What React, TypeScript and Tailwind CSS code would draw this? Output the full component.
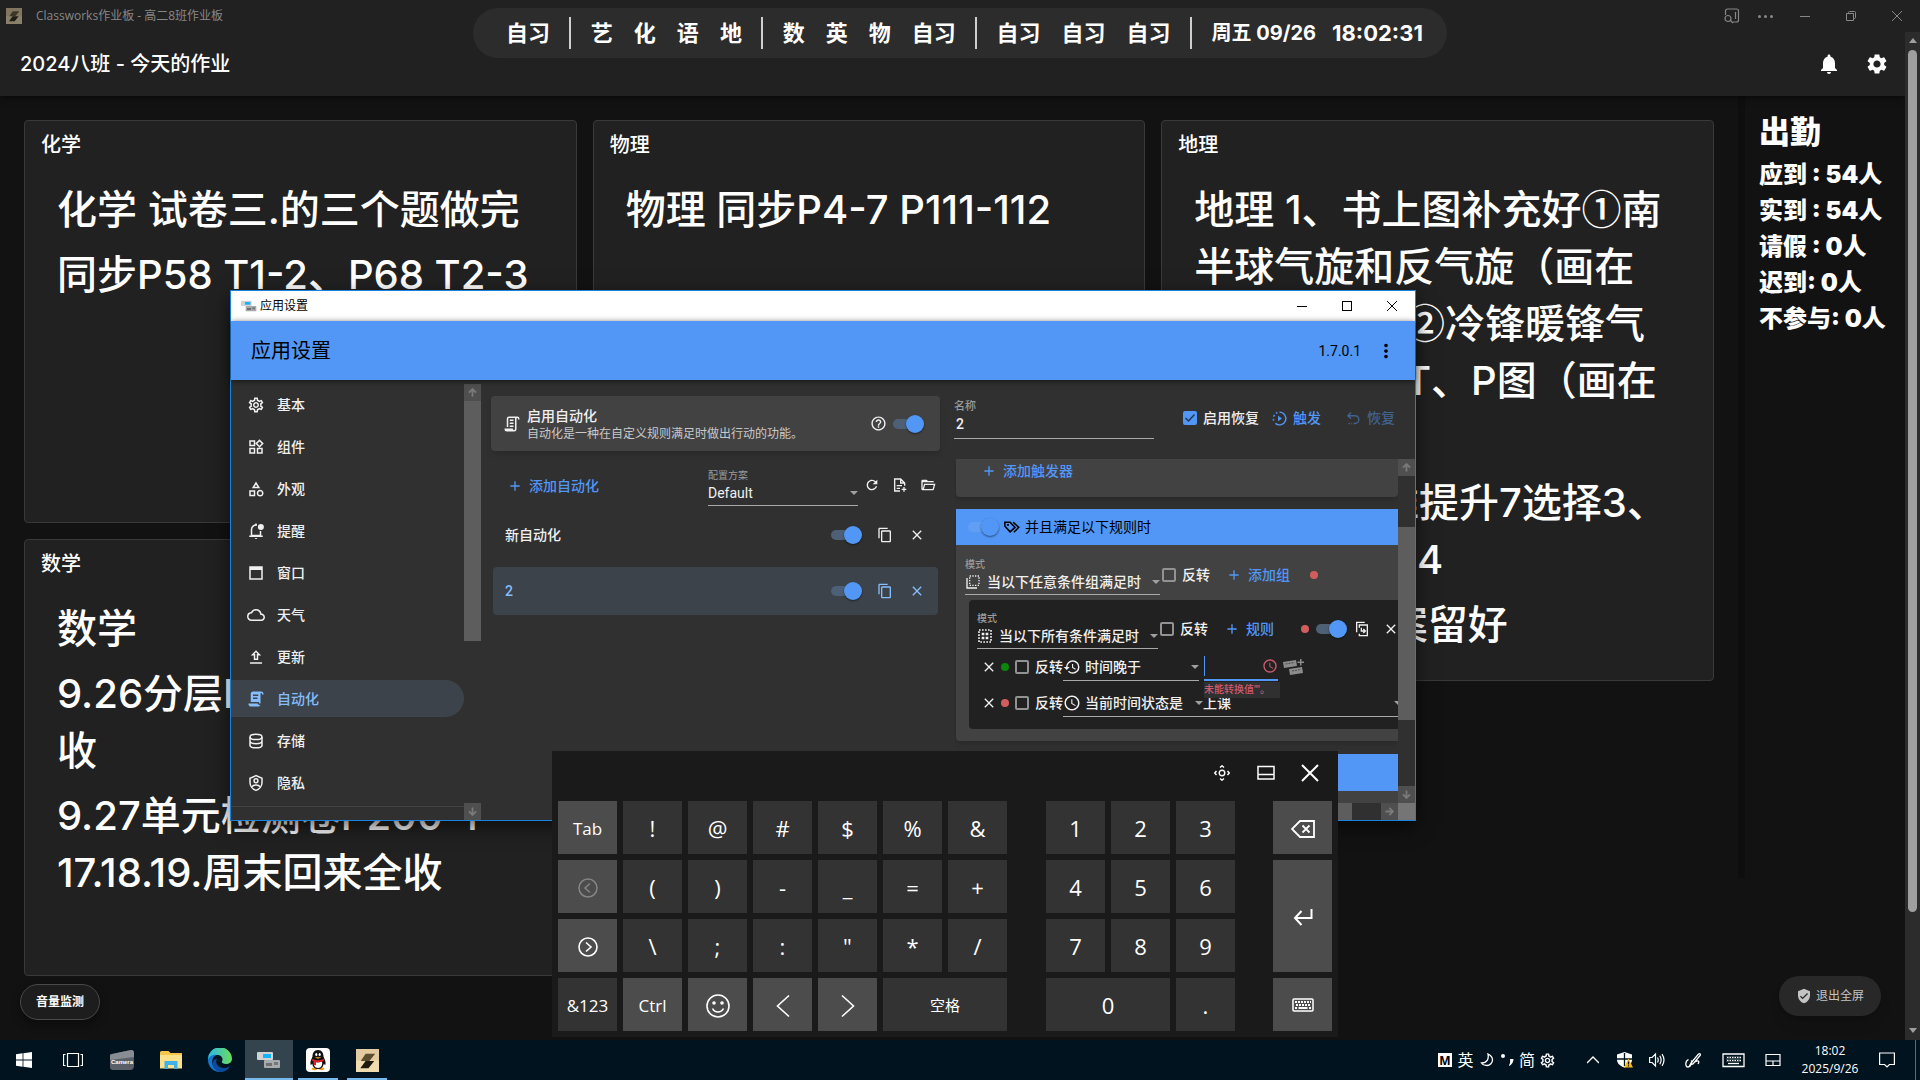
import React from "react";
import {
  MdOutlineSettings,
  MdOutlineWidgets,
  MdOutlineCategory,
  MdOutlineCloud,
  MdRefresh,
  MdHelpOutline,
  MdContentCopy,
  MdClose,
  MdHistory,
  MdAccessTime,
  MdSettings,
  MdNotifications,
  MdMoreVert,
  MdAdd,
  MdVerifiedUser,
} from "react-icons/md";

type SvgProps = { className?: string };

/* ---------- icons ---------- */

const Stroke = ({ className = "", w = 1.5, box = 24, children }: { className?: string; w?: number; box?: number; children: React.ReactNode }) => (
  <svg viewBox={`0 0 ${box} ${box}`} fill="none" stroke="currentColor" strokeWidth={w} className={className} aria-hidden="true">
    {children}
  </svg>
);

const ScriptOutline = ({ className }: SvgProps) => (
  <svg viewBox="0 0 24 24" fill="currentColor" className={className} aria-hidden="true">
    <path d="M15,20A1,1 0 0,0 16,19V4H8A1,1 0 0,0 7,5V16H5V5A3,3 0 0,1 8,2H19A3,3 0 0,1 22,5V6H20V5A1,1 0 0,0 19,4A1,1 0 0,0 18,5V9L18,19A3,3 0 0,1 15,22H5A3,3 0 0,1 2,19V18H13A2,2 0 0,0 15,20M9,6H14V8H9V6M9,10H14V12H9V10M9,14H14V16H9V14Z" />
  </svg>
);
const ScriptFilled = ({ className }: SvgProps) => (
  <svg viewBox="0 0 24 24" fill="currentColor" className={className} aria-hidden="true">
    <path d="M17.8,20C17.4,21.2 16.3,22 15,22H5C3.3,22 2,20.7 2,19V18H5L14.2,18C14.6,19.2 15.7,20 17,20H17.8M19,2C20.7,2 22,3.3 22,5V6H20V5C20,4.4 19.6,4 19,4C18.4,4 18,4.4 18,5V18H17C16.4,18 16,17.6 16,17V16H5V5C5,3.3 6.3,2 8,2H19M8,6V8H15V6H8M8,10V12H14V10H8Z" />
  </svg>
);
const BellBadge = ({ className }: SvgProps) => (
  <Stroke className={className} w={2}>
    <path d="M13 4.2A6 6 0 0 0 6 10v8h12v-6M3 19h18" />
    <path d="M10.2 21.4a2 2 0 0 0 3.6 0z" fill="currentColor" stroke="none" />
    <path d="M12 2v2.500" />
    <circle cx="18.500" cy="6.500" r="4" fill="currentColor" stroke="none" />
  </Stroke>
);
const WindowIcon = ({ className }: SvgProps) => (
  <svg viewBox="0 0 24 24" fill="currentColor" className={className} aria-hidden="true">
    <path d="M3 3h18v18H3zM5 8v11h14V8z" fillRule="evenodd" />
  </svg>
);
const UploadIcon = ({ className }: SvgProps) => (
  <svg viewBox="0 0 24 24" fill="currentColor" className={className} aria-hidden="true">
    <path d="M9 16h6v-6h4l-7-7-7 7h4v6zm3-10.170L14.170 8H13v6h-2V8H9.830L12 5.830zM4 19h16v2H4z" />
  </svg>
);
const ShieldUserIcon = ({ className }: SvgProps) => (
  <Stroke className={className} w={2}>
    <path d="M12 2.200 4 5.700V11c0 5 3.300 9.500 8 10.800 4.700-1.300 8-5.800 8-10.800V5.700z" />
    <circle cx="12" cy="9" r="2.600" />
    <path d="M6.500 17.200c1-2 3.200-2.700 5.500-2.700s4.500.700 5.500 2.700" />
  </Stroke>
);
const DatabaseIcon = ({ className }: SvgProps) => (
  <Stroke className={className} w={2}>
    <ellipse cx="12" cy="6.500" rx="8" ry="3.500" />
    <path d="M4 6.500v11C4 19.500 7.500 21 12 21s8-1.500 8-3.500v-11M4 12c0 2 3.500 3.500 8 3.500s8-1.500 8-3.500" />
  </Stroke>
);
const FolderOpen = ({ className }: SvgProps) => (
  <svg viewBox="0 0 24 24" fill="currentColor" className={className} aria-hidden="true">
    <path d="M6.1,10L4,18V8H21A2,2 0 0,0 19,6H12L10,4H4A2,2 0 0,0 2,6V18A2,2 0 0,0 4,20H19C19.9,20 20.7,19.4 20.9,18.5L23.2,10H6.1M19,18H6L7.6,12H20.6L19,18Z" />
  </svg>
);
const TagsIcon = ({ className }: SvgProps) => (
  <Stroke className={className} w={2}>
    <path d="M2.500 5.500v5.500l7 7.500 6.500-6L9.500 5.500zM13.500 5.500l7.500 7-6.500 6.500" />
    <circle cx="6.500" cy="9.200" r="1.500" fill="currentColor" stroke="none" />
  </Stroke>
);
const FilePlus = ({ className }: SvgProps) => (
  <Stroke className={className} w={2}>
    <path d="M12 21H4V3h9l6 6v4M13 3v6h6M7 13h8M7 17h5M18 15v7M14.500 18.500h7" />
  </Stroke>
);
const PlayProgress = ({ className }: SvgProps) => (
  <Stroke className={className} w={2}>
    <path d="M12 3a9 9 0 1 1-5.800 15.900M9 3.500 7 4.700M5 7 3.600 9.300M3.200 12.500l.5 2.500" />
    <path d="M10 8v8l5.500-4z" fill="currentColor" stroke="none" />
  </Stroke>
);
const UndoIcon = ({ className }: SvgProps) => (
  <Stroke className={className} w={2}>
    <path d="M8.500 3.500 4 8l4.500 4.500M4 8h10a5.500 5.500 0 0 1 0 11h-2M5 19h2M9 19h1" />
  </Stroke>
);
const SelectMultiple = ({ className }: SvgProps) => (
  <Stroke className={className} w={2}>
    <path d="M3 6v15h15" />
    <path d="M7 3h14v14H7z" strokeDasharray="2 2" />
  </Stroke>
);
const SelectAll = ({ className }: SvgProps) => (
  <Stroke className={className} w={2.5}>
    <path d="M3 3h18v18H3z" strokeDasharray="2.500 2" />
    <path d="M7 7h4v4H7zM13 7h4v4h-4zM7 13h4v4H7zM13 13h4v4h-4z" fill="currentColor" stroke="none" />
  </Stroke>
);
const CopyArrow = ({ className }: SvgProps) => (
  <Stroke className={className} w={2}>
    <path d="M4 17V2h12M8 10V6h12v16H8v-3" />
    <path d="M11 10v5h6M14 12l3 3-3 3" />
  </Stroke>
);
const KeyPad = ({ className }: SvgProps) => (
  <svg viewBox="0 0 24 18" className={className} aria-hidden="true">
    <g fill="#8c8c8c">
      <path d="m1 4 13-2 1 6-13 2z" />
      <path d="m7 11 13-2 1 6-13 2z" />
      <path d="M18 1h1.500v2.500H22V5h-2.500v2.500H18V5h-2.500V3.500H18z" />
    </g>
    <path d="m3.500 6 9-1.500M10 13l9-1.500" stroke="#4a4a4a" strokeWidth="1" strokeDasharray="2 1" />
  </svg>
);
const Triangle = ({ className }: SvgProps) => (
  <svg viewBox="0 0 8 4" fill="currentColor" className={className} aria-hidden="true">
    <path d="M0 0h8L4 4z" />
  </svg>
);
const Arrow = ({ className }: SvgProps) => (
  <Stroke className={className} w={2} box={10}>
    <path d="M5 9.500V1.500M1 5.200 5 1.200l4 4" />
  </Stroke>
);
const BoltIcon = ({ className }: SvgProps) => (
  <svg viewBox="0 0 24 24" className={className} aria-hidden="true">
    <rect width="24" height="24" fill="#e3cba1" />
    <rect y="12" width="24" height="12" fill="#f1dcb2" />
    <path d="M10 5h10L14 12.500H5z" fill="#5c4c30" />
    <path d="m10 12.500h9L13 20H4.500z" fill="#1f180c" />
  </svg>
);
const LessonIcon = ({ className }: SvgProps) => (
  <svg viewBox="0 0 24 18" className={className} aria-hidden="true">
    <rect x="0" y="1" width="16" height="8" rx="1" fill="#cfd2d4" />
    <rect x="6" y="3" width="8" height="4" fill="#12b4f5" />
    <rect x="7" y="9" width="16" height="8" rx="1" fill="#a7abae" />
    <rect x="9" y="12" width="6" height="3" fill="#6d7073" />
    <rect x="17" y="11" width="4" height="3" fill="#74787b" />
  </svg>
);

/* ---------- shared controls ---------- */

const Toggle = ({ label, faint = false }: { label: string; faint?: boolean }) => (
  <input
    type="checkbox"
    role="switch"
    aria-label={label}
    defaultChecked
    className={
      "relative h-[18px] w-[31px] shrink-0 appearance-none before:absolute before:left-0 before:top-1 before:h-[10px] before:w-6 before:rounded-full after:absolute after:right-0 after:top-0 after:size-[18px] after:rounded-full after:bg-[#5297f6] after:shadow-[0_1px_2px_rgba(0,0,0,0.5)] " +
      (faint ? "before:bg-[#619ff5]" : "before:bg-[#4d6076]")
    }
  />
);

const Tick = ({ label, checked = false }: { label: string; checked?: boolean }) => (
  <label className="flex shrink-0 items-center gap-1.5 whitespace-nowrap">
    <span className="relative size-3.5">
      <input
        type="checkbox"
        defaultChecked={checked}
        className="peer block size-3.5 appearance-none rounded-xs border-2 border-[#929292] checked:border-[#5297f6] checked:bg-[#5297f6]"
      />
      <svg viewBox="0 0 14 14" className="pointer-events-none absolute inset-0 hidden peer-checked:block" fill="none" stroke="#24384f" strokeWidth="1.500">
        <path d="m2.500 7 3 3 6-6.500" />
      </svg>
    </span>
    {label}
  </label>
);

const Field = ({ label, value, icon, className = "" }: { label: string; value: string; icon?: React.ReactNode; className?: string }) => (
  <label className={"block shrink-0 " + className}>
    <span className="block text-[10px] leading-3 text-[#9a9a9a]">{label}</span>
    <span className="flex h-6 items-center gap-1.5 border-b border-[#a9a9a9] pb-0.5">
      {icon}
      <select className="min-w-0 flex-1 appearance-none bg-transparent leading-5 outline-none" defaultValue={value}>
        <option>{value}</option>
      </select>
      <Triangle className="h-1 w-2 shrink-0 text-[#a0a0a0]" />
    </span>
  </label>
);

const InlineField = ({ label, value, icon, className = "" }: { label: string; value: string; icon?: React.ReactNode; className?: string }) => (
  <span className={"flex h-7 shrink-0 items-center gap-1 border-b border-[#a9a9a9] " + className}>
    {icon}
    <select aria-label={label} className="min-w-0 flex-1 appearance-none bg-transparent leading-5 outline-none" defaultValue={value}>
      <option>{value}</option>
    </select>
    <Triangle className="h-1 w-2 shrink-0 text-[#a0a0a0]" />
  </span>
);

const AddButton = ({ children, className = "" }: { children: React.ReactNode; className?: string }) => (
  <button className={"flex shrink-0 items-center gap-1.5 whitespace-nowrap text-[#5297f6] " + className}>
    <MdAdd className="size-4" />
    {children}
  </button>
);

const IconButton = ({ label, children }: { label: string; children: React.ReactNode }) => (
  <button aria-label={label} className="grid size-[18px] shrink-0 place-items-center">
    {children}
  </button>
);

/* ---------- homework board ---------- */

/* Circled digits come from the CJK face so that they keep a full-width cell. */
const HomeworkLine = ({ text }: { text: string }) => (
  <p>
    {text.split(/([①②])/).map((part, i) =>
      part === "①" || part === "②" ? (
        <span key={i} className="font-['Noto_Sans_CJK_SC',sans-serif] leading-none">{part}</span>
      ) : (
        part
      ),
    )}
  </p>
);

const SubjectCard = ({ title, items, className = "" }: { title: string; items: string[][]; className?: string }) => (
  <section className={"overflow-hidden rounded border border-[#393939] bg-[#212121] pb-[27px] " + className}>
    <h2 className="px-4 py-2 text-xl leading-8 font-medium">{title}</h2>
    <ul className="flex flex-col gap-2 px-8 pt-3 text-[40px] leading-[57px] font-medium whitespace-pre">
      {items.map((lines, i) => (
        <li key={i}>
          {lines.map((line) => (
            <HomeworkLine key={line} text={line} />
          ))}
        </li>
      ))}
    </ul>
  </section>
);

const attendance = ["应到 : 54人", "实到 : 54人", "请假 : 0人", "迟到: 0人", "不参与: 0人"];

const Board = () => (
  <div className="isolate flex min-h-0 flex-1 flex-col bg-[#121212] text-white">
    <header className="flex h-8 shrink-0 items-center bg-[#212121] text-[#878787]">
      <BoltIcon className="ml-1.5 size-4 opacity-50" />
      <span className="ml-3.5 font-['Open_Sans','Noto_Sans_CJK_SC',sans-serif] text-xs">Classworks作业板 - 高二8班作业板</span>
      <div className="ml-auto flex items-center">
        <button aria-label="搜索标签页" className="grid w-8 place-items-center">
          <Stroke className="size-4" w={1.2} box={16}>
            <path d="M1.500 7V3a2 2 0 0 1 2-2h9a2 2 0 0 1 2 2v9a2 2 0 0 1-2 2H9M11.500 4v7" />
            <circle cx="4" cy="10.500" r="3" />
            <path d="m6.500 12.500 2.500 2.500" />
          </Stroke>
        </button>
        <button aria-label="更多" className="flex w-[34px] justify-center gap-[3px]">
          <i className="size-[3px] rounded-full bg-[#878787]" />
          <i className="size-[3px] rounded-full bg-[#878787]" />
          <i className="size-[3px] rounded-full bg-[#878787]" />
        </button>
        <button aria-label="最小化" className="grid w-[46px] place-items-center">
          <i className="h-px w-2.5 bg-[#878787]" />
        </button>
        <button aria-label="还原" className="grid w-[46px] place-items-center">
          <Stroke className="size-2.5" w={1} box={10}>
            <path d="M.5 2.500h7v7h-7zM2.500 2.500v-1a1 1 0 0 1 1-1h5a1 1 0 0 1 1 1v5a1 1 0 0 1-1 1h-1" />
          </Stroke>
        </button>
        <button aria-label="关闭" className="grid w-[46px] place-items-center">
          <Stroke className="size-2.5" w={1} box={10}>
            <path d="m0 0 10 10M10 0 0 10" />
          </Stroke>
        </button>
      </div>
    </header>

    <div className="flex min-h-0 flex-1">
      <div className="relative flex min-w-0 flex-1 flex-col overflow-hidden">
        <div className="z-10 flex h-16 shrink-0 items-center bg-[#212121] px-5 shadow-[0_2px_6px_rgba(0,0,0,0.5)]">
          <h1 className="text-xl font-medium">2024八班 - 今天的作业</h1>
          <button aria-label="消息" className="ml-auto grid size-6 place-items-center">
            <MdNotifications className="size-6" />
          </button>
          <button aria-label="设置" className="mr-[-4px] ml-6 grid size-6 place-items-center">
            <MdSettings className="size-6" />
          </button>
        </div>
        <div className="flex flex-1">
          <main className="grid flex-1 grid-cols-3 items-start gap-4 p-6">
            <div className="flex flex-col gap-4">
              <SubjectCard
                title="化学"
                className="min-h-[403px]"
                items={[["化学 试卷三.的三个题做完"], ["同步P58 T1-2、P68 T2-3"]]}
              />
              <SubjectCard
                title="数学"
                className="min-h-[437px]"
                items={[["数学"], ["9.26分层P", "收"], ["9.27单元检测卷P200-1", "17.18.19.周末回来全收"]]}
              />
            </div>
            <SubjectCard title="物理" className="min-h-[403px]" items={[["物理 同步P4-7 P111-112"]]} />
            <SubjectCard
              title="地理"
              items={[
                ["地理 1、书上图补充好①南", "半球气旋和反气旋（画在", "同一图上） ②冷锋暖锋气", "压变化图、 T、P图（画在", "书上）"],
                ["2、课后重难提升7选择3、", "做到选择题: 4"],
                ["综合题 : 答案留好"],
              ]}
            />
          </main>
          <div className="h-[782px] w-[7px] bg-[#0e0e0e]" />
          <aside className="w-40 pt-[17px] pl-[14px] font-black">
            <h2 className="mb-1.5 text-[31px] leading-[38px]">出勤</h2>
            <ul className="text-2xl leading-9 whitespace-nowrap">
              {attendance.map((row) => (
                <li key={row}>{row}</li>
              ))}
            </ul>
          </aside>
        </div>
        <button className="absolute bottom-5 left-5 h-9 w-20 rounded-full border border-[#4a4a4a] bg-[#1d1d1d] text-xs font-bold shadow-[0_4px_10px_rgba(0,0,0,0.4)]">
          音量监测
        </button>
        <button className="absolute right-6 bottom-6 flex h-10 items-center gap-1 rounded-full bg-[#282828] px-[17px] text-xs text-[#c4c4c4] shadow-lg">
          <MdVerifiedUser className="size-4" />
          退出全屏
        </button>
      </div>
      <div className="flex w-[15px] shrink-0 flex-col items-center bg-[#2c2c2c] text-[#9f9f9f]">
        <svg viewBox="0 0 8 5" className="mt-1.5 h-[5px] w-2" fill="currentColor"><path d="M0 5h8L4 0z" /></svg>
        <div className="mt-[7px] h-[862px] w-[9px] rounded-full bg-[#9f9f9f]" />
        <svg viewBox="0 0 8 5" className="mt-auto mb-[7px] h-[5px] w-2" fill="currentColor"><path d="M0 0h8L4 5z" /></svg>
      </div>
    </div>
  </div>
);

/* ---------- timetable pill ---------- */

const timetable = [["自习"], ["艺", "化", "语", "地"], ["数", "英", "物", "自习"], ["自习", "自习", "自习"]];

const Timetable = () => (
  <div className="absolute top-2 left-[473px] z-10 flex h-[50px] w-[974px] items-center justify-between rounded-full bg-[#2c2c2c] pr-6 pl-[33px] text-[22px] font-bold whitespace-nowrap text-white">
    {timetable.map((group, i) => (
      <React.Fragment key={i}>
        <div className="flex gap-[21px]">
          {group.map((lesson, j) => (
            <span key={j}>{lesson}</span>
          ))}
        </div>
        <i className="h-8 w-0.5 bg-[#cfcfcf]" />
      </React.Fragment>
    ))}
    <div className="flex items-center gap-4">
      <span className="text-xl">周五 09/26</span>
      <time>18:02:31</time>
    </div>
  </div>
);

/* ---------- settings window ---------- */

const navItems: { name: string; Icon: React.ComponentType<{ className?: string }> }[] = [
  { name: "基本", Icon: MdOutlineSettings },
  { name: "组件", Icon: MdOutlineWidgets },
  { name: "外观", Icon: MdOutlineCategory },
  { name: "提醒", Icon: BellBadge },
  { name: "窗口", Icon: WindowIcon },
  { name: "天气", Icon: MdOutlineCloud },
  { name: "更新", Icon: UploadIcon },
  { name: "自动化", Icon: ScriptFilled },
  { name: "存储", Icon: DatabaseIcon },
  { name: "隐私", Icon: ShieldUserIcon },
];

const ScrollButton = ({ turn = "" }: { turn?: string }) => (
  <button aria-label="滚动" className="grid size-[17px] shrink-0 place-items-center bg-[#4f4f4f] text-[#7a7a7a]">
    <Arrow className={"size-[9px] " + turn} />
  </button>
);

const AutomationRow = ({ name, selected = false }: { name: string; selected?: boolean }) => (
  <li className={"flex h-12 items-center gap-3.5 rounded px-3 " + (selected ? "bg-[#3c434b] text-[#86bdfb]" : "")}>
    <span className="mr-auto">{name}</span>
    <Toggle label={name} />
    <IconButton label="复制"><MdContentCopy className="size-4" /></IconButton>
    <IconButton label="删除"><MdClose className="size-4" /></IconButton>
  </li>
);

const Settings = () => (
  <div className="absolute top-[290px] left-[230px] flex h-[531px] w-[1186px] flex-col border border-[#1a82dc] bg-[#303030] font-['Roboto','Noto_Sans_CJK_SC',sans-serif] text-sm leading-5 font-medium text-[#f0f0f0] shadow-[0_6px_18px_rgba(0,0,0,0.6)]">
    <div className="flex h-[30px] shrink-0 items-center bg-white text-xs font-normal text-black">
      <LessonIcon className="mr-[3px] ml-2.5 h-3 w-4" />
      应用设置
      <button aria-label="最小化" className="ml-auto grid h-full w-[45px] place-items-center"><i className="h-px w-2.5 bg-black" /></button>
      <button aria-label="最大化" className="grid h-full w-[45px] place-items-center"><i className="size-2.5 border border-black" /></button>
      <button aria-label="关闭" className="grid h-full w-[46px] place-items-center">
        <Stroke className="size-2.5" w={1} box={10}><path d="m0 0 10 10M10 0 0 10" /></Stroke>
      </button>
    </div>
    <div className="z-10 flex h-[59px] shrink-0 items-center bg-[#5297f6] px-5 text-black shadow-[0_1px_6px_rgba(0,0,0,0.6)]">
      <h1 className="text-xl font-normal">应用设置</h1>
      <span className="ml-auto font-normal">1.7.0.1</span>
      <button aria-label="菜单" className="mr-[-2px] ml-3.5"><MdMoreVert className="size-[22px]" /></button>
    </div>

    <div className="flex min-h-0 flex-1 pt-px">
      <nav className="flex w-[233px] shrink-0 flex-col gap-[5px] overflow-hidden pt-[5px]">
        {navItems.map(({ name, Icon }) => (
          <button
            key={name}
            className={
              "flex h-[37px] shrink-0 items-center gap-3 rounded-r-full pl-4 " +
              (name === "自动化" ? "bg-[#3c434b] text-[#86bdfb]" : "")
            }
          >
            <Icon className="size-[18px]" />
            {name}
          </button>
        ))}
        <hr className="border-[#424242]" />
      </nav>
      <div className="flex w-[17px] shrink-0 flex-col pt-[3px]">
        <ScrollButton />
        <div className="h-60 bg-[#5d5d5d]" />
        <div className="mt-auto flex"><ScrollButton turn="rotate-180" /></div>
      </div>

      <section className="ml-2.5 w-[449px] shrink-0 pt-[15px]">
        <div className="flex h-[55px] items-center gap-1.5 rounded bg-[#424242] pr-4 pl-3 shadow-md">
          <ScriptOutline className="size-[18px]" />
          <div className="mr-auto leading-5">
            <h2>启用自动化</h2>
            <p className="text-xs leading-4 font-normal text-[#c9c9c9]">自动化是一种在自定义规则满足时做出行动的功能。</p>
          </div>
          <IconButton label="帮助"><MdHelpOutline className="size-[17px]" /></IconButton>
          <Toggle label="启用自动化" />
        </div>
        <div className="mt-[17px] flex h-[43px] items-start pr-[3px] pl-4">
          <AddButton className="mt-2">添加自动化</AddButton>
          <Field label="配置方案" value="Default" className="mt-0.5 ml-auto w-[150px] font-normal" />
          <div className="mt-2 ml-[5px] flex gap-2.5">
            <IconButton label="刷新"><MdRefresh className="size-4" /></IconButton>
            <IconButton label="新建"><FilePlus className="size-4" /></IconButton>
            <IconButton label="打开"><FolderOpen className="size-4" /></IconButton>
          </div>
        </div>
        <ul className="mx-0.5 flex flex-col gap-2">
          <AutomationRow name="新自动化" />
          <AutomationRow name="2" selected />
        </ul>
      </section>

      <section className="ml-3.5 flex min-w-0 flex-1 flex-col pt-5">
        <div className="flex h-[58px] shrink-0 items-start pr-5">
          <label className="w-[200px]">
            <span className="block text-[11px] leading-3 text-[#9a9a9a]">名称</span>
            <input defaultValue="2" className="block h-[26px] w-full border-b border-[#a9a9a9] bg-transparent pb-1 pl-0.5 outline-none" />
          </label>
          <div className="ml-auto flex h-[34px] items-center">
            <Tick label="启用恢复" checked />
            <button className="ml-3 flex items-center gap-[5px] text-[#5297f6]"><PlayProgress className="size-[17px]" />触发</button>
            <button disabled className="ml-6 flex items-center gap-[5px] text-[#41638f]"><UndoIcon className="size-[17px]" />恢复</button>
          </div>
        </div>

        <div className="flex min-h-0 flex-1">
          <div className="min-w-0 flex-1 overflow-hidden pl-0.5">
            <div className="flex h-[38px] items-start rounded-b bg-[#424242] pt-0.5 pl-[25px] shadow-md">
              <AddButton>添加触发器</AddButton>
            </div>
            <div className="mt-3 rounded-bl bg-[#424242] pb-3 shadow-md">
              <div className="flex h-9 items-center gap-1 bg-[#5297f6] pl-3 font-normal text-black">
                <Toggle label="启用规则" faint />
                <TagsIcon className="size-[18px]" />
                并且满足以下规则时
              </div>
              <div className="flex pt-3.5 pl-[9px]">
                <Field label="模式" value="当以下任意条件组满足时" className="w-[195px]" icon={<SelectMultiple className="size-4 shrink-0" />} />
                <div className="ml-0.5 flex h-8 items-center">
                  <Tick label="反转" />
                  <AddButton className="ml-4">添加组</AddButton>
                  <i className="ml-5 size-2 rounded-full bg-[#d25d5d]" />
                </div>
              </div>
              <div className="mt-[5px] ml-[13px] overflow-hidden rounded-l bg-[#212121] pt-[13px] pb-3">
                <div className="flex pl-2">
                  <Field label="模式" value="当以下所有条件满足时" className="w-[181px]" icon={<SelectAll className="size-4 shrink-0" />} />
                  <div className="ml-0.5 flex h-8 shrink-0 items-center">
                    <Tick label="反转" />
                    <AddButton className="ml-4">规则</AddButton>
                    <i className="mr-[7px] ml-[27px] size-2 rounded-full bg-[#d25d5d]" />
                    <Toggle label="启用条件组" />
                    <div className="ml-1.5 flex gap-[11px]">
                      <IconButton label="复制条件组"><CopyArrow className="size-4" /></IconButton>
                      <IconButton label="删除条件组"><MdClose className="size-4" /></IconButton>
                    </div>
                  </div>
                </div>
                <div className="mt-1 flex flex-col gap-2 pl-[11px]">
                  <div className="flex h-7 items-center">
                    <IconButton label="删除规则"><MdClose className="size-4" /></IconButton>
                    <i className="mr-1.5 ml-[3px] size-2 shrink-0 rounded-full bg-[#0b870b]" />
                    <Tick label="反转" />
                    <InlineField label="规则类型" value="时间晚于" className="w-[136px]" icon={<MdHistory className="size-[18px]" />} />
                    <div className="relative ml-[5px] flex h-7 w-[74px] items-center border-b-2 border-[#5297f6]">
                      <i className="h-5 w-px shrink-0 bg-[#5297f6]" />
                      <input aria-label="时间" className="min-w-0 flex-1 bg-transparent outline-none" />
                      <MdAccessTime className="size-4 shrink-0 text-[#cf5a70]" />
                      <p className="absolute top-[29px] left-0 z-10 h-4 w-[76px] bg-[#303030] text-[10px] leading-4 whitespace-nowrap text-[#cf5a70]">未能转换值""。</p>
                    </div>
                    <KeyPad className="ml-1 h-[18px] w-6" />
                  </div>
                  <div className="flex h-7 items-center">
                    <IconButton label="删除规则"><MdClose className="size-4" /></IconButton>
                    <i className="mr-1.5 ml-[3px] size-2 shrink-0 rounded-full bg-[#d25d5d]" />
                    <Tick label="反转" />
                    <InlineField label="规则类型" value="当前时间状态是" className="w-[140px]" icon={<MdAccessTime className="size-[18px]" />} />
                    <InlineField label="状态" value="上课" className="w-[199px]" />
                  </div>
                </div>
              </div>
            </div>
            <div className="mt-[13px] h-[37px] bg-[#5297f6]" />
            <div className="h-3 bg-[#424242]" />
          </div>
          <div className="flex w-[17px] shrink-0 flex-col">
            <ScrollButton />
            <div className="mt-[51px] h-[193px] bg-[#5d5d5d]" />
            <div className="mt-auto flex"><ScrollButton turn="rotate-180" /></div>
          </div>
        </div>
        <div className="flex h-[17px] shrink-0">
          <div className="flex-1 bg-[#5d5d5d]" />
          <div className="w-[29px]" />
          <ScrollButton turn="rotate-90" />
          <div className="w-[17px] bg-[#757575]" />
        </div>
      </section>
    </div>
  </div>
);

/* ---------- touch keyboard ---------- */

const Key = ({ children, light = false, small = false, className = "", label }: { children: React.ReactNode; light?: boolean; small?: boolean; className?: string; label?: string }) => (
  <button
    aria-label={label}
    className={
      "grid place-items-center pt-0.5 text-white " + (light ? "bg-[#4c4c4c] " : "bg-[#333333] ") + (small ? "text-[17px] " : "text-[22px] ") + className
    }
  >
    {children}
  </button>
);

const Keyboard = () => (
  <div className="absolute top-[751px] left-[552px] w-[786px] bg-[#1a1a1a] px-1.5 pb-1.5 font-['Open_Sans','Noto_Sans_CJK_SC',sans-serif] text-white">
    <div className="flex h-[50px] items-center justify-end gap-4 pr-2 pb-1.5">
      <button aria-label="移动" className="grid size-7 place-items-center">
        <Stroke className="size-4" w={1.4} box={16}>
          <circle cx="8" cy="8" r="2.800" />
          <path d="M6 2.500 8 .8l2 1.700M6 13.500l2 1.700 2-1.700M2.500 6 .8 8l1.700 2M13.500 6l1.700 2-1.700 2" />
        </Stroke>
      </button>
      <button aria-label="停靠" className="grid size-7 place-items-center">
        <Stroke className="size-[18px]" w={1.5} box={18}>
          <path d="M1 2.500h16v12.500H1zM1 10.500h16" />
        </Stroke>
      </button>
      <button aria-label="关闭键盘" className="grid size-7 place-items-center">
        <Stroke className="size-[18px]" w={2} box={18}><path d="m1 1 16 16M17 1 1 17" /></Stroke>
      </button>
    </div>
    <div className="flex">
      <div className="grid flex-1 auto-rows-[53px] grid-cols-7 gap-1.5">
        <Key light small>Tab</Key>
        {["!", "@", "#", "$", "%", "&"].map((k) => <Key key={k}>{k}</Key>)}
        <Key light label="上一页">
          <Stroke className="size-5 text-[#858585]" w={1.500} box={20}><circle cx="10" cy="10" r="9" /><path d="m12 5.500-5 4.500 5 4.500" /></Stroke>
        </Key>
        {["(", ")", "-", "_", "=", "+"].map((k) => <Key key={k}>{k}</Key>)}
        <Key light label="下一页">
          <Stroke className="size-5" w={1.600} box={20}><circle cx="10" cy="10" r="9" /><path d="m8 5.500 5 4.500-5 4.500" /></Stroke>
        </Key>
        {["\\", ";", ":", '"', "*", "/"].map((k) => <Key key={k}>{k}</Key>)}
        <Key small>&amp;123</Key>
        <Key light small>Ctrl</Key>
        <Key light label="表情">
          <Stroke className="size-6" w={1.600}>
            <circle cx="12" cy="12" r="11" />
            <path d="M6.500 14.500c1.200 2.400 3 3.500 5.500 3.500s4.300-1.100 5.500-3.500" />
            <circle cx="8" cy="9" r="1" fill="currentColor" /><circle cx="16" cy="9" r="1" fill="currentColor" />
          </Stroke>
        </Key>
        <Key light label="左"><Stroke className="size-6" w={1.600}><path d="M18 1.500 6.500 12 18 22.500" /></Stroke></Key>
        <Key light label="右"><Stroke className="size-6" w={1.600}><path d="M6 1.500 17.500 12 6 22.500" /></Stroke></Key>
        <Key className="col-span-2 text-[15px]!">空格</Key>
      </div>
      <div className="ml-[39px] grid w-[189px] auto-rows-[53px] grid-cols-3 gap-1.5">
        {["1", "2", "3", "4", "5", "6", "7", "8", "9"].map((k) => <Key key={k}>{k}</Key>)}
        <Key className="col-span-2">0</Key>
        <Key>.</Key>
      </div>
      <div className="ml-[38px] grid w-[59px] auto-rows-[53px] gap-1.5">
        <Key light label="退格">
          <Stroke className="size-6" w={1.800}><path d="M9 4h14v16H9l-8-8zM11.500 8.500l7 7M18.500 8.500l-7 7" /></Stroke>
        </Key>
        <Key light label="回车" className="row-span-2">
          <Stroke className="size-5" w={2} box={20}><path d="M18.500 2v9H2M8.500 4 2 11l6.500 7" /></Stroke>
        </Key>
        <Key light label="键盘布局">
          <Stroke className="size-[22px]" w={1.500} box={22}>
            <rect x="1" y="4" width="20" height="12" rx="1" />
            <path d="M3 7h16M4 10h14" strokeDasharray="2 1" strokeWidth="1.800" />
            <path d="M3 13h2M6.500 13h9M17 13h2" strokeWidth="1.800" />
          </Stroke>
        </Key>
      </div>
    </div>
  </div>
);

/* ---------- taskbar ---------- */

const TaskButton = ({ label, state = "", children }: { label: string; state?: string; children: React.ReactNode }) => (
  <button aria-label={label} className={"relative grid h-10 w-12 place-items-center " + (state === "active" ? "bg-[#33444f]" : "")}>
    {children}
    {state !== "" && <i className={"absolute bottom-0 h-0.5 bg-[#76b9ed] " + (state === "active" ? "inset-x-0" : "inset-x-1")} />}
  </button>
);

const Tray = ({ label, className = "w-10", children }: { label: string; className?: string; children: React.ReactNode }) => (
  <button aria-label={label} className={"grid h-10 place-items-center " + className}>{children}</button>
);

const Taskbar = () => (
  <footer className="flex h-10 shrink-0 items-center gap-px bg-[#00131e] font-['Open_Sans','Noto_Sans_CJK_SC',sans-serif] text-white">
    <TaskButton label="开始">
      <svg viewBox="0 0 16 16" className="size-4" fill="currentColor"><path d="M0 2.200 6.600 1.300v6.300H0zM7.400 1.200 16 0v7.600H7.400zM0 8.400h6.600v6.300L0 13.800zM7.400 8.400H16V16l-8.600-1.200z" /></svg>
    </TaskButton>
    <TaskButton label="任务视图">
      <Stroke className="size-5" w={1.200} box={20}><path d="M4.500 3.500h11v13h-11zM2.500 4.500h-2v11h2M17.500 4.500h2v11h-2" /></Stroke>
    </TaskButton>
    <TaskButton label="Camera">
      <svg viewBox="0 0 24 21" className="h-[21px] w-6">
        <path d="M2 4 21 0q3 0 3 3v13q0 3-3 4H3q-3 0-3-3V6q0-2 2-2z" fill="#5a6067" />
        <path d="M2 4 21 0q3 0 3 3v4L0 10V6q0-2 2-2z" fill="#878d93" />
        <text x="12" y="14" fontSize="6" textAnchor="middle" fontFamily="Liberation Sans" fontWeight="700" fill="#fff">Camera</text>
      </svg>
    </TaskButton>
    <TaskButton label="文件资源管理器">
      <svg viewBox="0 0 22 18" className="h-[18px] w-[22px]">
        <path d="M0 1.500Q0 0 1.500 0h7l2 2H22v15H0z" fill="#f5c64b" />
        <path d="M0 4h22v13.500H0z" fill="#fde08a" />
        <path d="M4.500 10h13v8h-3.500v-4H8v4H4.500z" fill="#3fb2ea" />
      </svg>
    </TaskButton>
    <TaskButton label="Edge">
      <svg viewBox="0 0 24 24" className="size-6">
        <defs>
          <linearGradient id="edgeTop" x1="0" x2="1"><stop offset="0" stopColor="#2ab8ea" /><stop offset="1" stopColor="#6cdc5a" /></linearGradient>
        </defs>
        <path d="M0 12a12 12 0 0 1 24-1.500c0 4-3 5.500-6 5.500-3.500 0-4.500-1.500-4-2.500 1.500-3-.5-6.500-5-6.500C4 7 1 10 0 12z" fill="url(#edgeTop)" />
        <path d="M0 12c1-4 5-5.500 8.500-5.200C5 8.500 3.500 12 4.500 16c1 4 5 7.500 8.500 7.900C6 24.500 0 19 0 12z" fill="#1477cf" />
        <path d="M9 10.500c-2.500 5 1.500 9.500 7 9.500 2.500 0 4.500-1 6-1.800-2 3.800-6 5.800-9.500 5.800C8 23 4.500 20 4.500 15.500 4.500 13 6.500 11 9 10.500z" fill="#0c4a9c" />
      </svg>
    </TaskButton>
    <TaskButton label="ClassIsland" state="active"><LessonIcon className="h-[18px] w-6" /></TaskButton>
    <TaskButton label="QQ" state="open">
      <svg viewBox="0 0 24 24" className="size-6">
        <rect width="24" height="24" rx="4" fill="#fff" />
        <ellipse cx="8.500" cy="20.800" rx="3" ry="1.400" fill="#f6a11c" /><ellipse cx="15.500" cy="20.800" rx="3" ry="1.400" fill="#f6a11c" />
        <path d="M12 2c-4 0-5.500 3-5.500 6.500C5.500 11 4 13.500 4.500 16.500c.5.500 1.200 0 1.700-.8C7 19.500 9 21 12 21s5-1.500 5.800-5.300c.5.800 1.200 1.300 1.700.8.500-3-1-5.500-2-8C17.500 5 16 2 12 2z" fill="#111" />
        <path d="M8 13.500c1 1 7 1 8 0 .8 3-.5 6.500-4 6.500s-4.800-3.500-4-6.500z" fill="#fff" />
        <ellipse cx="10.300" cy="6.500" rx="1.100" ry="1.600" fill="#fff" /><ellipse cx="13.700" cy="6.500" rx="1.100" ry="1.600" fill="#fff" />
        <path d="M8.500 9.200h7L12 10.800z" fill="#f6a11c" />
        <path d="M6.500 11c3 1.800 8 1.800 11 0l.5 1.800c-2.500 1.500-6 1.800-8 1.500v3H8v-3.500l-2-1z" fill="#e3202a" />
      </svg>
    </TaskButton>
    <TaskButton label="Classworks" state="open"><BoltIcon className="size-[23px]" /></TaskButton>

    <div className="ml-auto flex items-center pr-1">
      <div className="mr-5 flex items-center text-base leading-5">
        <Tray label="输入法" className="w-5"><span className="grid size-3.5 place-items-center bg-white text-xs font-bold text-black">M</span></Tray>
        <Tray label="中英切换" className="w-[21px]">英</Tray>
        <Tray label="全半角" className="w-[21px]">
          <Stroke className="size-3.5" w={1.300} box={14}><path d="M8 1c3 1.500 4.500 3.500 4.500 6S10 12.500 7 12.500 2.500 11.500 1.500 10C7 10 9 6 8 1z" /></Stroke>
        </Tray>
        <Tray label="标点" className="w-5">
          <svg viewBox="0 0 14 14" className="size-3.5" fill="currentColor"><circle cx="3" cy="3" r="2" /><path d="M10 6h3.500c0 3-1.500 5-4 7l-.5-.8c1-1.500 1.500-3.500 1-6.200z" /></svg>
        </Tray>
        <Tray label="简繁" className="w-5">简</Tray>
        <Tray label="输入法设置" className="w-5"><MdOutlineSettings className="size-[17px]" /></Tray>
      </div>
      <Tray label="显示隐藏的图标" className="w-8"><Stroke className="h-3 w-3" w={1.400} box={12}><path d="m0 9 6-6 6 6" /></Stroke></Tray>
      <Tray label="安全中心" className="w-8">
        <svg viewBox="0 0 16 16" className="size-4">
          <path d="M7.500 0 15 2.500v5c0 4-3 6.500-7.500 8C3 14 0 11.500 0 7.500v-5z" fill="#fff" />
          <path d="M7.500 1v13M0 7h15" stroke="#00131e" strokeWidth="1.300" />
          <path d="m11.500 6.500 4.500 9H7z" fill="#f8b916" /><path d="M11.500 9.500v3M11.500 13.300v1.200" stroke="#111" strokeWidth="1.200" />
        </svg>
      </Tray>
      <Tray label="音量" className="w-8">
        <Stroke className="size-4" w={1.200} box={16}><path d="M.6 5.500h2.500L6.500 2v12l-3.400-3.500H.6zM8.500 5.500q1.500 2.500 0 5M10.800 3.800q2.600 4.200 0 8.400M13 2.200q4 5.800 0 11.600" /></Stroke>
      </Tray>
      <Tray label="手写笔">
        <Stroke className="size-4" w={1.300} box={16}><path d="m6 11 7.500-9q2-1 1.800 1.200L8 12l-3 1zM3.500 7.500C0 9 0 15 3 15s5-5 3-6.500M10 10c3-2 5-1 3 2" /></Stroke>
      </Tray>
      <Tray label="触摸键盘">
        <Stroke className="size-[23px]" w={1.300} box={23}><path d="M1 5h21v12.500H1zM4 8.500h15M4 11.500h15" /><path d="M4 8.500h15M4 11.500h15" stroke="#00131e" strokeDasharray="1 1.500" /><path d="M6 14.500h11" /></Stroke>
      </Tray>
      <Tray label="触摸板"><Stroke className="size-4" w={1.200} box={16}><path d="M1 2.500h14v11H1zM1 9h14M8 9v4.500" /></Stroke></Tray>
      <div className="w-[74px] text-center text-xs leading-[18px]"><p>18:02</p><p>2025/9/26</p></div>
      <Tray label="通知"><Stroke className="size-4" w={1.200} box={16}><path d="M.6 1h14.800v11.500h-5L8 15l-2.400-2.500h-5z" /></Stroke></Tray>
      <i className="ml-2 h-10 w-px bg-[#5b6a73]" />
    </div>
  </footer>
);

export default function App() {
  return (
    <div className="relative flex h-screen flex-col overflow-hidden bg-[#121212] font-['Inter','Noto_Sans_CJK_SC',sans-serif]">
      <Board />
      <Timetable />
      <Settings />
      <Keyboard />
      <Taskbar />
    </div>
  );
}
